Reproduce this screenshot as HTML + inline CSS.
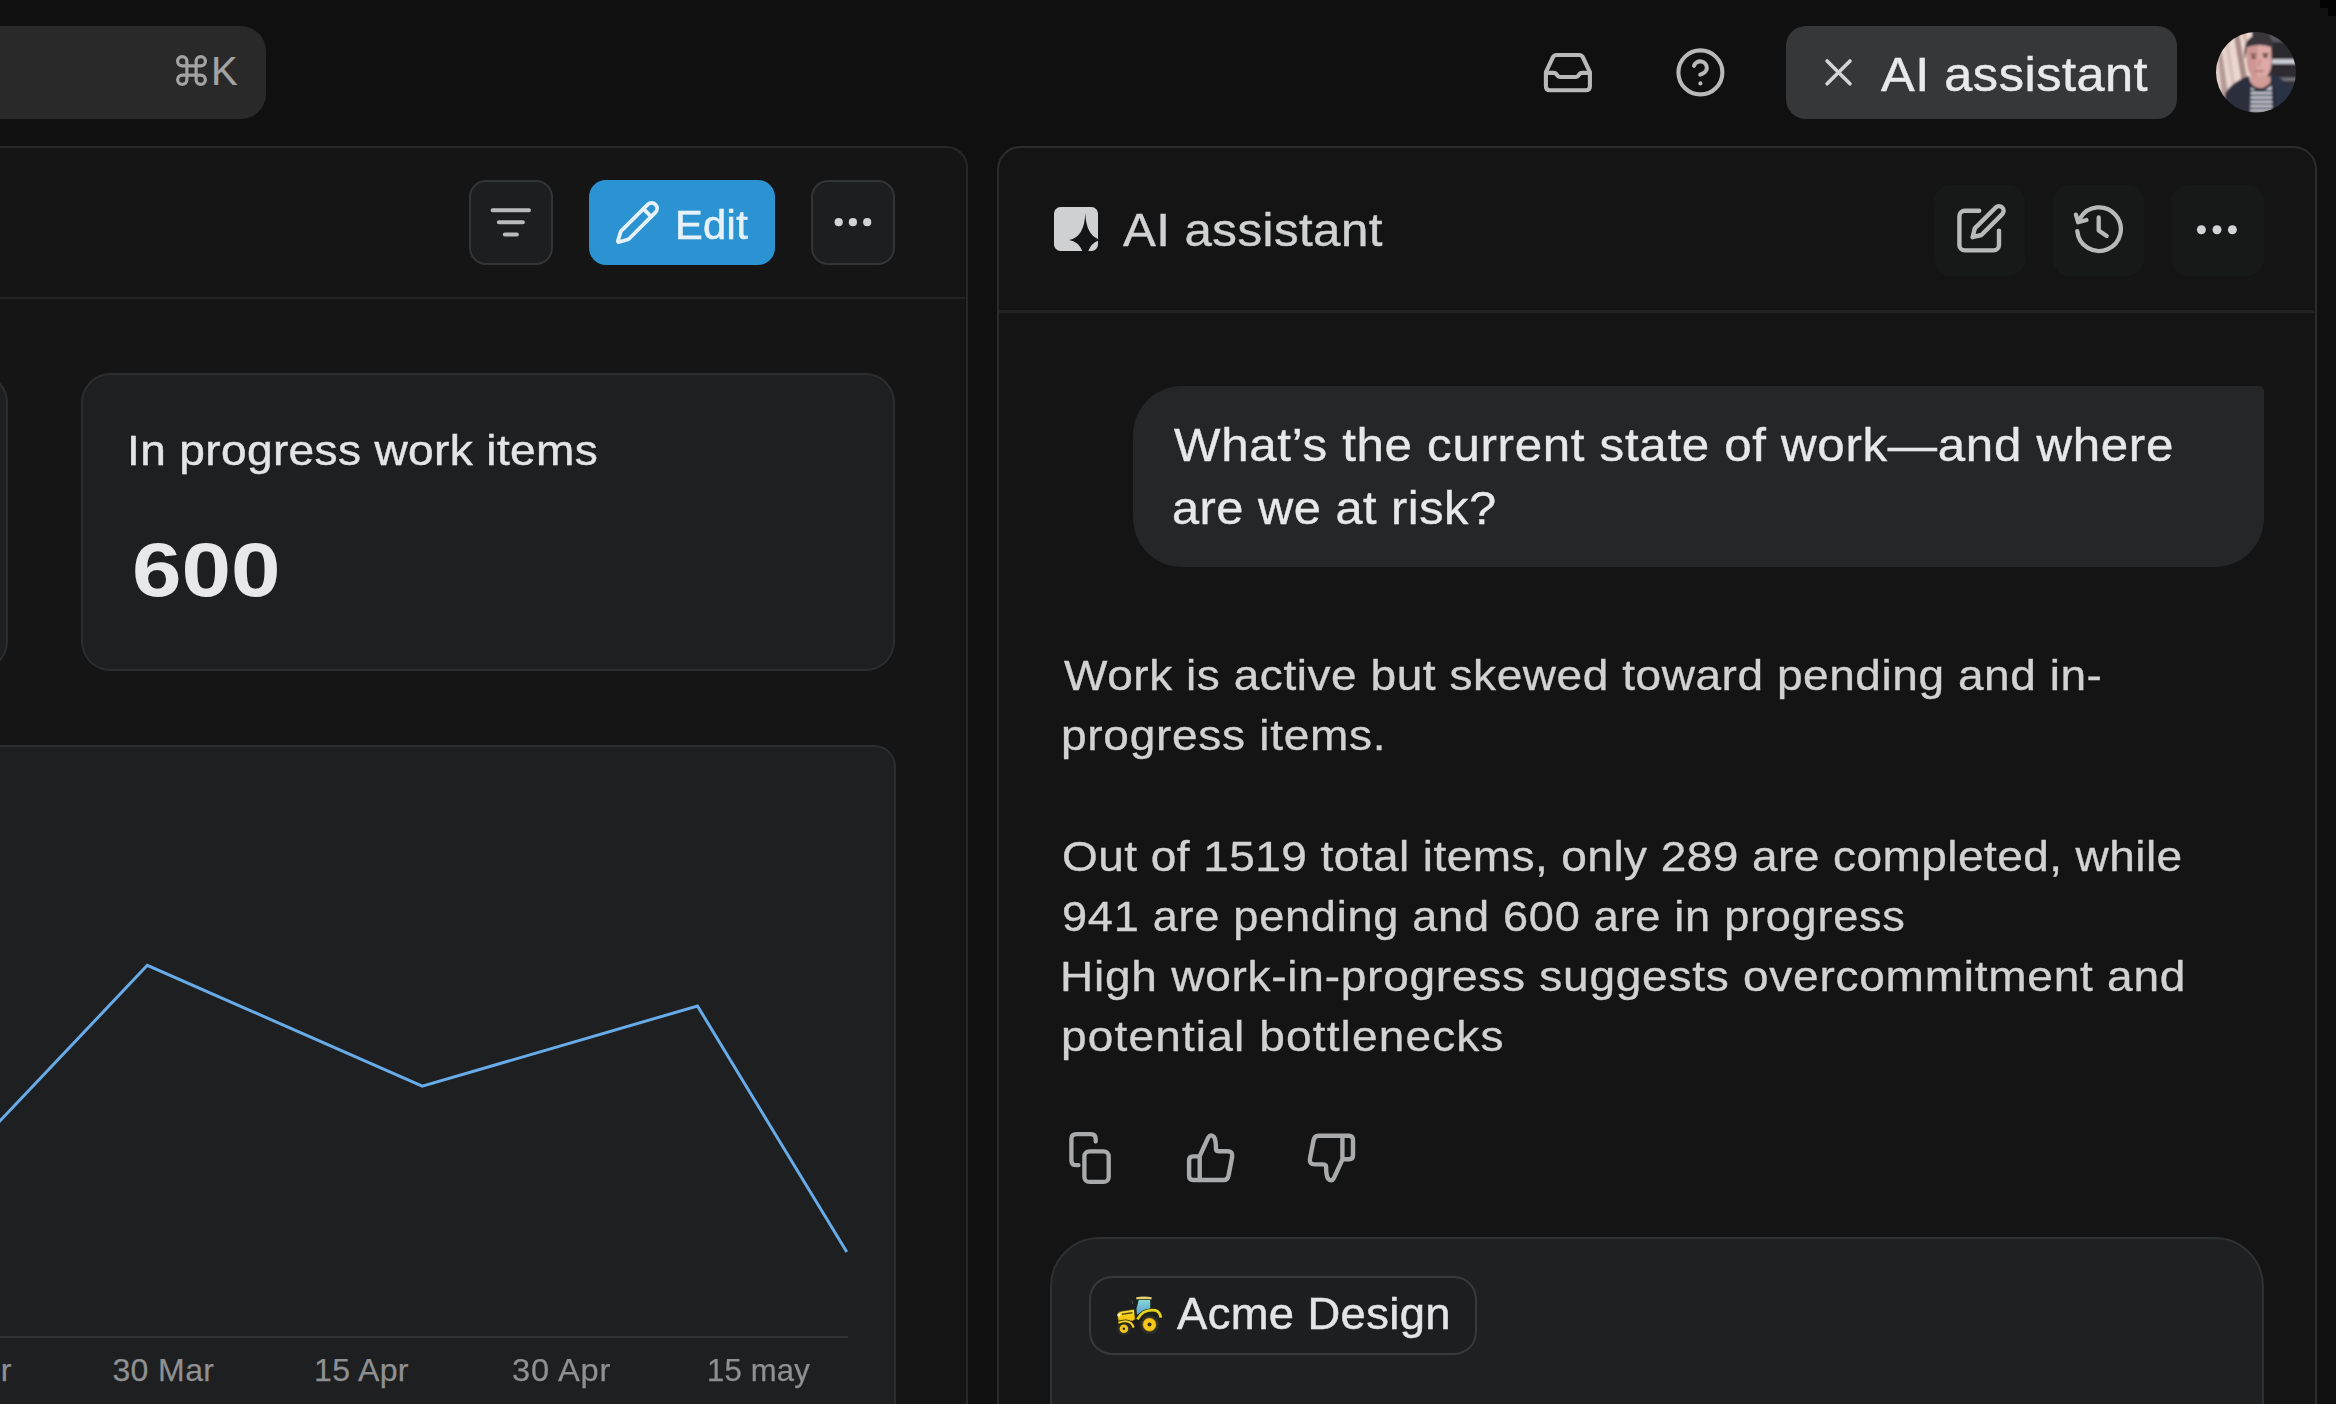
<!DOCTYPE html>
<html lang="en"><head><meta charset="utf-8"><title>AI assistant</title>
<style>
html,body{margin:0;padding:0;overflow:hidden}
#root{position:absolute;left:0;top:0;width:2336px;height:1404px;overflow:hidden;background:#101010}
body{width:2336px;height:1404px;overflow:hidden;position:relative;background:#101010;font-family:"Liberation Sans",sans-serif}
.a{position:absolute;box-sizing:border-box}
.t{position:absolute;white-space:nowrap;line-height:1;font-family:"Liberation Sans",sans-serif}
svg{position:absolute;overflow:visible}
.ic{fill:none;stroke-linecap:round;stroke-linejoin:round}

</style></head>
<body>
<div id="root">
<!-- top bar -->
<div class="a" style="left:2320px;top:0;width:16px;height:8px;background:#030303"></div><div class="a" style="left:2328px;top:8px;width:8px;height:8px;background:#030303"></div>
<div class="a" style="left:-60px;top:26px;width:326px;height:93px;border-radius:25px;background:#292929"></div>
<svg class="ic" style="left:172.9px;top:51.9px" width="37" height="37" viewBox="0 0 24 24" stroke="#a3a3a3" stroke-width="2.05"><path d="M15 6v12a3 3 0 1 0 3-3H6a3 3 0 1 0 3 3V6a3 3 0 1 0-3 3h12a3 3 0 1 0-3-3"/></svg>

<svg class="ic" style="left:1540px;top:48px" width="56" height="48" viewBox="0 0 56 48" stroke="#b9b9b9" stroke-width="4.1"><path d="M5.9 24.1V38.3Q5.9 42.3 9.9 42.3H45.9Q49.9 42.3 49.9 38.3V24.1L43 9.5Q41.8 7 39.1 7H16.7Q14 7 12.8 9.5Z"/><path d="M5.9 24.9H13.5Q15.8 24.9 17 27Q18.2 29 20.5 29H35.3Q37.6 29 38.8 27Q40 24.9 42.3 24.9H49.9"/></svg>
<svg class="ic" style="left:1673.8px;top:46.1px" width="52.8" height="52.8" viewBox="0 0 24 24" stroke="#b9b9b9" stroke-width="1.85"><circle cx="12" cy="12" r="10"/><path d="M9.09 9a3 3 0 0 1 5.83 1c0 2-3 3-3 3"/><path d="M12 17h.01"/></svg>

<div class="a" style="left:1786px;top:26px;width:391px;height:93px;border-radius:20px;background:#363738"></div>
<svg class="ic" style="left:1820px;top:54px" width="38" height="38" viewBox="0 0 38 38" stroke="#d4d4d4" stroke-width="3.6"><path d="M7.1 7L30 29.8M30 7L7.1 29.8"/></svg>

<!-- avatar -->
<svg id="avatar" style="left:2216.3px;top:32.3px" width="80" height="80.6" viewBox="0 0 80 80" preserveAspectRatio="none">
<defs><clipPath id="avc"><circle cx="40" cy="40" r="40"/></clipPath><filter id="avb" x="-10%" y="-10%" width="120%" height="120%"><feGaussianBlur stdDeviation="0.8"/></filter>
<linearGradient id="avw" x1="0" x2="1"><stop offset="0" stop-color="#e4cfca"/><stop offset="1" stop-color="#f0dcd5"/></linearGradient></defs>
<g clip-path="url(#avc)"><g filter="url(#avb)">
<rect x="-4" y="-4" width="88" height="88" fill="#3a383d"/>
<rect x="-4" y="-4" width="40" height="88" fill="url(#avw)"/>
<path d="M17 -2L22.5 -2L33 56L27 58Z" fill="#a98a86"/>
<path d="M2 24L6 20L15 82L8 82Z" fill="#b39a95"/>
<path d="M9 10L12 8L22 70L19 72Z" fill="#d8beb8"/>
<path d="M26 -2L29 -2L36 30L33 32Z" fill="#d3b2a2"/>
<rect x="54" y="-2" width="32" height="14" fill="#595861"/>
<rect x="56" y="10" width="30" height="16" fill="#2c2a2f"/>
<rect x="56" y="27" width="30" height="4.6" fill="#cfcfd8"/>
<rect x="56" y="32" width="30" height="12" fill="#2d2b30"/>
<rect x="58" y="45.5" width="28" height="3" fill="#77767e"/>
<rect x="58" y="49" width="28" height="12" fill="#34323a"/>
<path d="M28.8 27Q26.5 9 37 4Q47 -0.5 54.5 6Q59 11 56.8 26L54.5 15Q43 10.5 31.5 15.5Z" fill="#38363b"/>
<path d="M30.6 15.5Q43 10.5 55 14.8L55.6 31Q54.5 43 47 47.3Q42.5 49.5 38 46.5Q31.5 41 30.8 30Z" fill="#dda9a6"/>
<path d="M30.6 15.5Q36 13 42 12.6L40 47.8Q38.8 47.3 38 46.5Q31.5 41 30.8 30Z" fill="#c88f8c" opacity="0.7"/>
<path d="M34.5 44H54.5V56H34.5Z" fill="#d29c97"/>
<ellipse cx="37.6" cy="25" rx="2.4" ry="1.2" fill="#4a3432"/><ellipse cx="49.4" cy="24.4" rx="2.4" ry="1.2" fill="#4a3432"/>
<path d="M34.5 22.2L40.5 22.2M46.4 21.6L52.4 21.8" stroke="#3c2b2a" stroke-width="1.3"/>
<path d="M39.5 38.8H47.5" stroke="#9c5f5c" stroke-width="1.4"/>
<path d="M44 27L43 33.5" stroke="#b98079" stroke-width="1.6"/>
<path d="M33 52Q44 63 57.5 50L60 84L33 84Z" fill="#c9ccd4"/>
<path d="M33 58.6H60M33 62.9H60M33 67.2H60M33 71.5H60M33 75.8H60M33 80H60" stroke="#474c59" stroke-width="2"/>
<path d="M33 50.5Q44 64.5 57.5 49" fill="none" stroke="#232631" stroke-width="2.6"/>
<path d="M9 62Q14 50.5 33 43.5L35 52L34 84L9 84Z" fill="#2b2f3d"/>
<path d="M55 41.5Q70 47.5 79 58L82 84L57 84Z" fill="#2c3245"/>
<path d="M57 52L58.5 84" stroke="#1f222c" stroke-width="1.5"/>
</g></g></svg>
<!-- left panel -->
<div class="a" style="left:-60px;top:145.9px;width:1027.6px;height:1400px;border:2.4px solid #272727;border-radius:21.5px;background:#151515"></div>
<div class="a" style="left:-60px;top:296.8px;width:1025.2px;height:2.4px;background:#232323"></div>

<div class="a" style="left:469px;top:180px;width:84px;height:85px;border:2.5px solid #323436;border-radius:17px;background:#1c1e20"></div>
<svg class="ic" style="left:469px;top:180px" width="84" height="85" viewBox="0 0 84 85" stroke="#b9baba" stroke-width="4"><path d="M23.6 30.2H60M29.8 42.2H53.9M35.8 54.4H47.9"/></svg>

<div class="a" style="left:589.4px;top:180px;width:185.4px;height:85px;border-radius:17px;background:#2b93d1"></div>
<svg class="ic" style="left:614.2px;top:198.6px" width="47" height="47" viewBox="0 0 24 24" stroke="#e6f1f9" stroke-width="1.95"><path d="M21.174 6.812a1 1 0 0 0-3.986-3.987L3.842 16.174a2 2 0 0 0-.5.83l-1.321 4.352a.5.5 0 0 0 .623.622l4.353-1.32a2 2 0 0 0 .83-.497z"/><path d="m15 5 4 4"/></svg>

<div class="a" style="left:811px;top:180px;width:84px;height:85px;border:2.5px solid #323436;border-radius:17px;background:#1c1e20"></div>
<svg style="left:811px;top:180px" width="84" height="85" viewBox="0 0 84 85" fill="#d2d3d4"><circle cx="27.7" cy="42.2" r="4.1"/><circle cx="41.9" cy="42.2" r="4.1"/><circle cx="56.2" cy="42.2" r="4.1"/></svg>

<!-- stat cards -->
<div class="a" style="left:-120px;top:372.5px;width:127.5px;height:298.8px;border:2.4px solid #2b2d2f;border-radius:29.7px;background:#1e1f21"></div>
<div class="a" style="left:80.8px;top:372.5px;width:814.6px;height:298.8px;border:2.4px solid #2b2d2f;border-radius:29.7px;background:#1e1f21"></div>

<!-- chart card -->
<div class="a" style="left:-60px;top:744.8px;width:955.5px;height:800px;border:2.4px solid #2b2d2f;border-radius:22px;background:#1e1f21"></div>
<svg style="left:0;top:900px" width="900" height="400" viewBox="0 900 900 400" fill="none" stroke="#67abe8" stroke-width="3" stroke-linejoin="miter"><path d="M-10 1131.5L147.3 965.3L422.3 1086.2L697.5 1006L846.8 1252"/></svg>
<div class="a" style="left:0;top:1336px;width:847.6px;height:2.4px;background:#2f3133"></div>

<!-- right panel -->
<div class="a" style="left:996.8px;top:145.5px;width:1319.9px;height:1400px;border:2.3px solid #2c2c2c;border-radius:23.5px;background:#141414"></div>
<div class="a" style="left:999px;top:310.3px;width:1315.4px;height:2.4px;background:#222222"></div>

<div class="a" style="left:1053.9px;top:206.9px;width:44.3px;height:44.6px;border-radius:6.5px;background:#cfd0d2;overflow:hidden">
 <svg style="left:0;top:0" width="45" height="45" viewBox="0 0 45 45"><path fill="#141516" d="M31.3 5.8Q32.2 30.5 47.5 32.9Q32.2 35.3 31.3 60Q30.4 35.3 15.1 32.9Q30.4 30.5 31.3 5.8Z"/></svg>
</div>

<div class="a" style="left:1933.5px;top:184.5px;width:91px;height:91.5px;border-radius:17px;background:#171919"></div>
<div class="a" style="left:2052.5px;top:184.5px;width:91.5px;height:91.5px;border-radius:17px;background:#171919"></div>
<div class="a" style="left:2171px;top:184.5px;width:92.5px;height:91.5px;border-radius:17px;background:#171919"></div>
<svg class="ic" style="left:1954.5px;top:201.8px" width="52.8" height="52.8" viewBox="0 0 24 24" stroke="#b8b9b9" stroke-width="2"><path d="M11 4H4.5a2.5 2.5 0 0 0-2.5 2.5v13a2.5 2.5 0 0 0 2.5 2.5h13a2.5 2.5 0 0 0 2.5-2.5v-6.5"/><path d="M18.5 2.5a2.121 2.121 0 0 1 3 3L12 15l-4 1 1-4 9.5-9.5z"/></svg>
<svg class="ic" style="left:2070.7px;top:201.2px" width="56" height="56" viewBox="-28 -28 56 56" stroke="#b8b9b9" stroke-width="4.3"><path d="M-21.7 2.2A21.8 21.8 0 1 0 -18.7 -11"/><path d="M-23.1 -14.4L-20.8 -6.7L-12.5 -9"/><path d="M-0.3 -11.5V1.6L7.7 7.1"/></svg>
<svg style="left:2171px;top:184.5px" width="92" height="92" viewBox="0 0 92 92" fill="#d2d3d4"><circle cx="30.4" cy="44.7" r="4.5"/><circle cx="46" cy="44.7" r="4.5"/><circle cx="61.4" cy="44.7" r="4.5"/></svg>

<!-- bubble -->
<div class="a" style="left:1133px;top:386px;width:1131px;height:181px;border-radius:49px 5px 49px 49px;background:#242627"></div>

<!-- action icons -->
<svg class="ic" style="left:1064px;top:1128px" width="52" height="60" viewBox="0 0 52 60" stroke="#a9aaab" stroke-width="4.3"><rect x="20.4" y="23.3" width="24.3" height="30.6" rx="5"/><path d="M14.5 37.2H12.4Q7.4 37.2 7.4 32.2V11.2Q7.4 6.2 12.4 6.2H26.7Q31.7 6.2 31.7 11.2V13.5"/></svg>
<svg class="ic" style="left:1184px;top:1128px" width="54" height="60" viewBox="0 0 54 60" stroke="#a9aaab" stroke-width="4.4"><path d="M15.7 28.2L24.2 9.6Q26.6 5.5 30 9Q32 12 32 20.9Q32 23.3 35.5 23.3H43.3Q49 23.3 48.2 28.5L44.5 47.7Q43.5 52 39.8 52H9.1Q5.1 52 5.1 48V32.4Q5.1 28.4 9.1 28.4H15.7V52"/></svg>
<svg class="ic" style="left:1305.4px;top:1128px" width="54" height="60" viewBox="0 0 54 60" stroke="#a9aaab" stroke-width="4.4"><path transform="rotate(180 26.55 29.85)" d="M15.7 28.2L24.2 9.6Q26.6 5.5 30 9Q32 12 32 20.9Q32 23.3 35.5 23.3H43.3Q49 23.3 48.2 28.5L44.5 47.7Q43.5 52 39.8 52H9.1Q5.1 52 5.1 48V32.4Q5.1 28.4 9.1 28.4H15.7V52"/></svg>

<!-- input card -->
<div class="a" style="left:1049.6px;top:1236.7px;width:1214.6px;height:400px;border:2.4px solid #2e3032;border-radius:49.5px;background:#1e2022"></div>
<div class="a" style="left:1089.3px;top:1276.3px;width:388px;height:78.4px;border:2.4px solid #37393c;border-radius:23px;background:#1c1e20"></div>
<!-- tractor -->
<svg id="tractor" style="left:1114px;top:1292px" width="50" height="46" viewBox="0 0 50 46">
<defs><linearGradient id="trw" x1="0" y1="0" x2="0" y2="1"><stop offset="0" stop-color="#86d6d6"/><stop offset="1" stop-color="#5a9fd6"/></linearGradient>
<linearGradient id="trh" x1="0" y1="0" x2="0" y2="1"><stop offset="0" stop-color="#f5e04a"/><stop offset="0.45" stop-color="#f6cf16"/><stop offset="1" stop-color="#e9b50f"/></linearGradient>
<filter id="trb" x="-10%" y="-10%" width="120%" height="120%"><feGaussianBlur stdDeviation="0.35"/></filter></defs>
<g filter="url(#trb)">
<path d="M17.8 8.3L18.6 12" stroke="#4a4e54" stroke-width="1"/>
<path d="M21.6 7.2H38.2L38 23H21.2Z" fill="#17261a"/>
<path d="M22.3 5.2Q30 4 37.6 5.2V7.3H22.3Z" fill="#e6cf78"/>
<path d="M24.7 8H36.2V16.9L30 18.6L22.9 22.8L22.5 16.7Z" fill="url(#trw)"/>
<path d="M21 26H34V38H21Z" fill="#1d1e1c"/>
<path d="M3.2 22.7Q4 19.8 6.8 19.3L20.3 17.2L21.3 27.4L18.6 29L4.6 31.2Z" fill="url(#trh)" stroke="#3a300c" stroke-width="0.7"/>
<path d="M7.9 22.2L18.4 20.7" stroke="#5a4a12" stroke-width="1.5"/>
<circle cx="4.9" cy="23" r="1.5" fill="#fff6cf"/>
<circle cx="35.5" cy="32.6" r="9.6" fill="#2b2d27"/>
<circle cx="35.5" cy="32.6" r="6.6" fill="#f6c81b"/>
<circle cx="35.5" cy="32.6" r="6.6" fill="none" stroke="#b8860c" stroke-width="0.7"/>
<circle cx="35.5" cy="32.6" r="2" fill="#3b2a08"/>
<circle cx="9.9" cy="36.8" r="6.8" fill="#2b2d27"/>
<circle cx="9.9" cy="36.8" r="4.3" fill="#f3c61c"/>
<circle cx="9.9" cy="36.8" r="1.3" fill="#3b2a08"/>
<path d="M4.4 30.9Q16.5 26.5 19.6 35.8" fill="none" stroke="#2a2408" stroke-width="4"/>
<path d="M4.4 30.7Q16.8 26.2 19.6 35.6" fill="none" stroke="#f0cf2e" stroke-width="2.2"/>
<path d="M23.4 27.6Q29 16.8 41.5 18.6Q46 20 46.8 25.8" fill="none" stroke="#2a2408" stroke-width="4.4"/>
<path d="M23.4 27.4Q29 16.6 41.5 18.4Q46 19.8 46.8 25.6" fill="none" stroke="#e3d521" stroke-width="2.8"/>
</g></svg>

<div class="t" id="t_k" style="left:211.00px;top:50.94px;font-size:40px;font-weight:400;color:#a3a3a3;letter-spacing:0.000px;-webkit-text-stroke:0.2px #a3a3a3;">K</div>
<div class="t" id="t_pill" style="left:1881.20px;top:49.92px;font-size:49px;font-weight:400;color:#e9e9ea;letter-spacing:0.509px;-webkit-text-stroke:0.5px #e9e9ea;transform:scaleX(1.0300);transform-origin:0 0;">AI assistant</div>
<div class="t" id="t_edit" style="left:674.80px;top:204.84px;font-size:40px;font-weight:400;color:#e6f1f9;letter-spacing:0.321px;-webkit-text-stroke:0.6px #e6f1f9;transform:scaleX(1.0400);transform-origin:0 0;">Edit</div>
<div class="t" id="t_title" style="left:1123.40px;top:206.96px;font-size:46px;font-weight:400;color:#d0d1d2;letter-spacing:0.425px;-webkit-text-stroke:0.45px #d0d1d2;transform:scaleX(1.0700);transform-origin:0 0;">AI assistant</div>
<div class="t" id="t_b1" style="left:1174.00px;top:422.06px;font-size:46px;font-weight:400;color:#e8e8e9;letter-spacing:0.661px;-webkit-text-stroke:0.4px #e8e8e9;transform:scaleX(1.0700);transform-origin:0 0;">What’s the current state of work—and where</div>
<div class="t" id="t_b2" style="left:1172.00px;top:485.46px;font-size:46px;font-weight:400;color:#e8e8e9;letter-spacing:0.472px;-webkit-text-stroke:0.4px #e8e8e9;transform:scaleX(1.0600);transform-origin:0 0;">are we at risk?</div>
<div class="t" id="t_a1" style="left:1063.60px;top:653.60px;font-size:43px;font-weight:400;color:#d2d2d3;letter-spacing:0.517px;-webkit-text-stroke:0.35px #d2d2d3;transform:scaleX(1.0700);transform-origin:0 0;">Work is active but skewed toward pending and in-</div>
<div class="t" id="t_a2" style="left:1060.60px;top:713.80px;font-size:43px;font-weight:400;color:#d2d2d3;letter-spacing:0.668px;-webkit-text-stroke:0.35px #d2d2d3;transform:scaleX(1.0700);transform-origin:0 0;">progress items.</div>
<div class="t" id="t_a3" style="left:1062.00px;top:835.10px;font-size:43px;font-weight:400;color:#d2d2d3;letter-spacing:0.406px;-webkit-text-stroke:0.35px #d2d2d3;transform:scaleX(1.0700);transform-origin:0 0;">Out of 1519 total items, only 289 are completed, while</div>
<div class="t" id="t_a4" style="left:1062.00px;top:895.20px;font-size:43px;font-weight:400;color:#d2d2d3;letter-spacing:0.677px;-webkit-text-stroke:0.35px #d2d2d3;transform:scaleX(1.0500);transform-origin:0 0;">941 are pending and 600 are in progress</div>
<div class="t" id="t_a5" style="left:1060.00px;top:955.20px;font-size:43px;font-weight:400;color:#d2d2d3;letter-spacing:0.701px;-webkit-text-stroke:0.35px #d2d2d3;transform:scaleX(1.0700);transform-origin:0 0;">High work-in-progress suggests overcommitment and</div>
<div class="t" id="t_a6" style="left:1061.00px;top:1015.30px;font-size:43px;font-weight:400;color:#d2d2d3;letter-spacing:1.075px;-webkit-text-stroke:0.35px #d2d2d3;transform:scaleX(1.0700);transform-origin:0 0;">potential bottlenecks</div>
<div class="t" id="t_acme" style="left:1176.90px;top:1292.25px;font-size:44px;font-weight:400;color:#e4e4e6;letter-spacing:0.388px;-webkit-text-stroke:0.5px #e4e4e6;transform:scaleX(1.0300);transform-origin:0 0;">Acme Design</div>
<div class="t" id="t_card" style="left:126.90px;top:428.80px;font-size:43px;font-weight:400;color:#e3e4e6;letter-spacing:0.356px;-webkit-text-stroke:0.45px #e3e4e6;transform:scaleX(1.0700);transform-origin:0 0;">In progress work items</div>
<div class="t" id="t_n600" style="left:131.60px;top:532.17px;font-size:76px;font-weight:700;color:#e8e8ea;letter-spacing:0.000px;-webkit-text-stroke:0.0px #e8e8ea;transform:scaleX(1.1722);transform-origin:0 0;">600</div>
<div class="t" id="t_x0" style="left:0.80px;top:1353.91px;font-size:32px;font-weight:400;color:#8f9092;letter-spacing:0.000px;-webkit-text-stroke:0.25px #8f9092;">r</div>
<div class="t" id="t_x1" style="left:112.40px;top:1353.91px;font-size:32px;font-weight:400;color:#8f9092;letter-spacing:0.400px;-webkit-text-stroke:0.25px #8f9092;">30 Mar</div>
<div class="t" id="t_x2" style="left:314.00px;top:1353.91px;font-size:32px;font-weight:400;color:#8f9092;letter-spacing:0.400px;-webkit-text-stroke:0.25px #8f9092;">15 Apr</div>
<div class="t" id="t_x3" style="left:511.80px;top:1353.91px;font-size:32px;font-weight:400;color:#8f9092;letter-spacing:0.784px;-webkit-text-stroke:0.25px #8f9092;transform:scaleX(1.0200);transform-origin:0 0;">30 Apr</div>
<div class="t" id="t_x4" style="left:706.50px;top:1353.91px;font-size:32px;font-weight:400;color:#8f9092;letter-spacing:0.206px;-webkit-text-stroke:0.25px #8f9092;transform:scaleX(0.9700);transform-origin:0 0;">15 may</div>
</div>
</body></html>
